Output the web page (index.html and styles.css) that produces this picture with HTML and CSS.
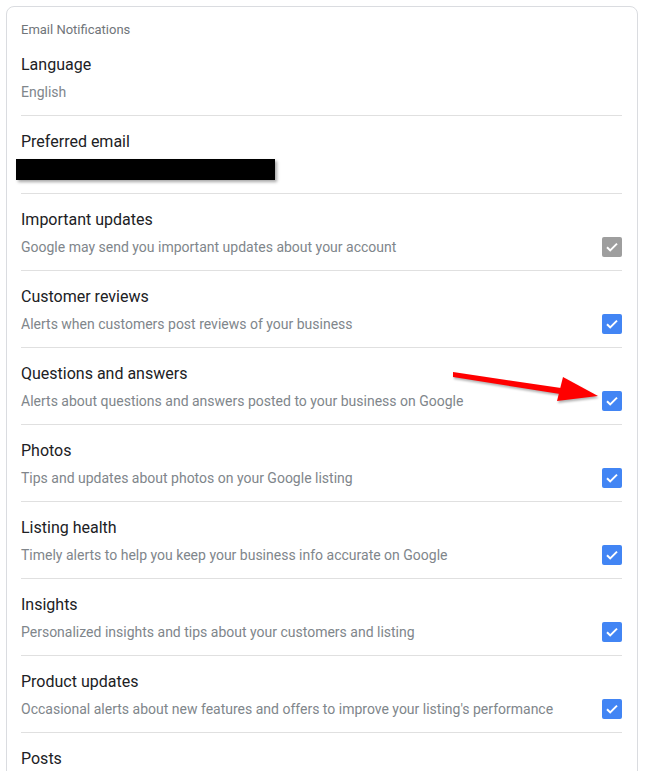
FILE: index.html
```html
<!DOCTYPE html>
<html lang="en">
<head>
    <meta charset="UTF-8">
    <meta name="viewport" content="width=device-width, initial-scale=1.0">
    <title>Email Notifications</title>
    <link rel="stylesheet" href="styles.css">
</head>
<body>
    <div class="card">
        <div class="card-title">Email Notifications</div>

        <div class="row">
            <div class="text">
                <div class="label">Language</div>
                <div class="desc">English</div>
            </div>
        </div>

        <div class="row">
            <div class="text">
                <div class="label">Preferred email</div>
                <div class="redacted"></div>
            </div>
        </div>

        <div class="row">
            <div class="text">
                <div class="label">Important updates</div>
                <div class="desc">Google may send you important updates about your account</div>
            </div>
            <span class="check disabled"><svg viewBox="0 0 20 20"><path d="M5 10.2l3.2 3.2 6.8-6.8"/></svg></span>
        </div>

        <div class="row">
            <div class="text">
                <div class="label">Customer reviews</div>
                <div class="desc">Alerts when customers post reviews of your business</div>
            </div>
            <span class="check"><svg viewBox="0 0 20 20"><path d="M5 10.2l3.2 3.2 6.8-6.8"/></svg></span>
        </div>

        <div class="row">
            <div class="text">
                <div class="label">Questions and answers</div>
                <div class="desc">Alerts about questions and answers posted to your business on Google</div>
            </div>
            <span class="check"><svg viewBox="0 0 20 20"><path d="M5 10.2l3.2 3.2 6.8-6.8"/></svg></span>
        </div>

        <div class="row">
            <div class="text">
                <div class="label">Photos</div>
                <div class="desc">Tips and updates about photos on your Google listing</div>
            </div>
            <span class="check"><svg viewBox="0 0 20 20"><path d="M5 10.2l3.2 3.2 6.8-6.8"/></svg></span>
        </div>

        <div class="row">
            <div class="text">
                <div class="label">Listing health</div>
                <div class="desc">Timely alerts to help you keep your business info accurate on Google</div>
            </div>
            <span class="check"><svg viewBox="0 0 20 20"><path d="M5 10.2l3.2 3.2 6.8-6.8"/></svg></span>
        </div>

        <div class="row">
            <div class="text">
                <div class="label">Insights</div>
                <div class="desc">Personalized insights and tips about your customers and listing</div>
            </div>
            <span class="check"><svg viewBox="0 0 20 20"><path d="M5 10.2l3.2 3.2 6.8-6.8"/></svg></span>
        </div>

        <div class="row">
            <div class="text">
                <div class="label">Product updates</div>
                <div class="desc">Occasional alerts about new features and offers to improve your listing's performance</div>
            </div>
            <span class="check"><svg viewBox="0 0 20 20"><path d="M5 10.2l3.2 3.2 6.8-6.8"/></svg></span>
        </div>

        <div class="row last">
            <div class="text">
                <div class="label">Posts</div>
            </div>
        </div>
    </div>

    <!-- annotation arrow -->
    <svg class="arrow" width="651" height="771" viewBox="0 0 651 771">
        <polygon points="453,372 561,388 560,394 453,377" fill="#f00"/>
        <polygon points="563,377 598,396 557,401" fill="#f00"/>
    </svg>
</body>
</html>
```

FILE: styles.css
```css
body { margin: 0; padding: 6px 0 0 6px; background: #fff; font-family: Roboto, "Noto Sans", Arial, sans-serif; overflow: hidden; }
.card { width: 601px; border: 1px solid #dadce0; border-radius: 8px; padding: 14px 15px 0 14px; }
.card-title { font-size: 13px; line-height: 18px; color: #70757a; }
.row { display: flex; align-items: flex-end; border-bottom: 1px solid #e0e0e0; padding: 15px 0 13px; }
.row.last { border-bottom: none; padding-bottom: 40px; }
.text { flex: 1; }
.label { font-size: 16px; line-height: 22px; color: #202124; }
.desc { font-size: 14px; line-height: 20px; color: #80868b; margin-top: 6px; }
.redacted { width: 259px; height: 21px; background: #000; margin: 6px 0 0 -5px; box-shadow: 2px 2px 3px rgba(0,0,0,0.35); }
.check { width: 20px; height: 20px; border-radius: 2px; background: #4285f4; display: block; }
.check.disabled { background: #9e9e9e; }
.check svg { width: 20px; height: 20px; display: block; fill: none; stroke: #fff; stroke-width: 2; }
.arrow { position: absolute; left: 0; top: 0; pointer-events: none; filter: drop-shadow(1px 2px 1px rgba(0,0,0,0.3)); }
```
